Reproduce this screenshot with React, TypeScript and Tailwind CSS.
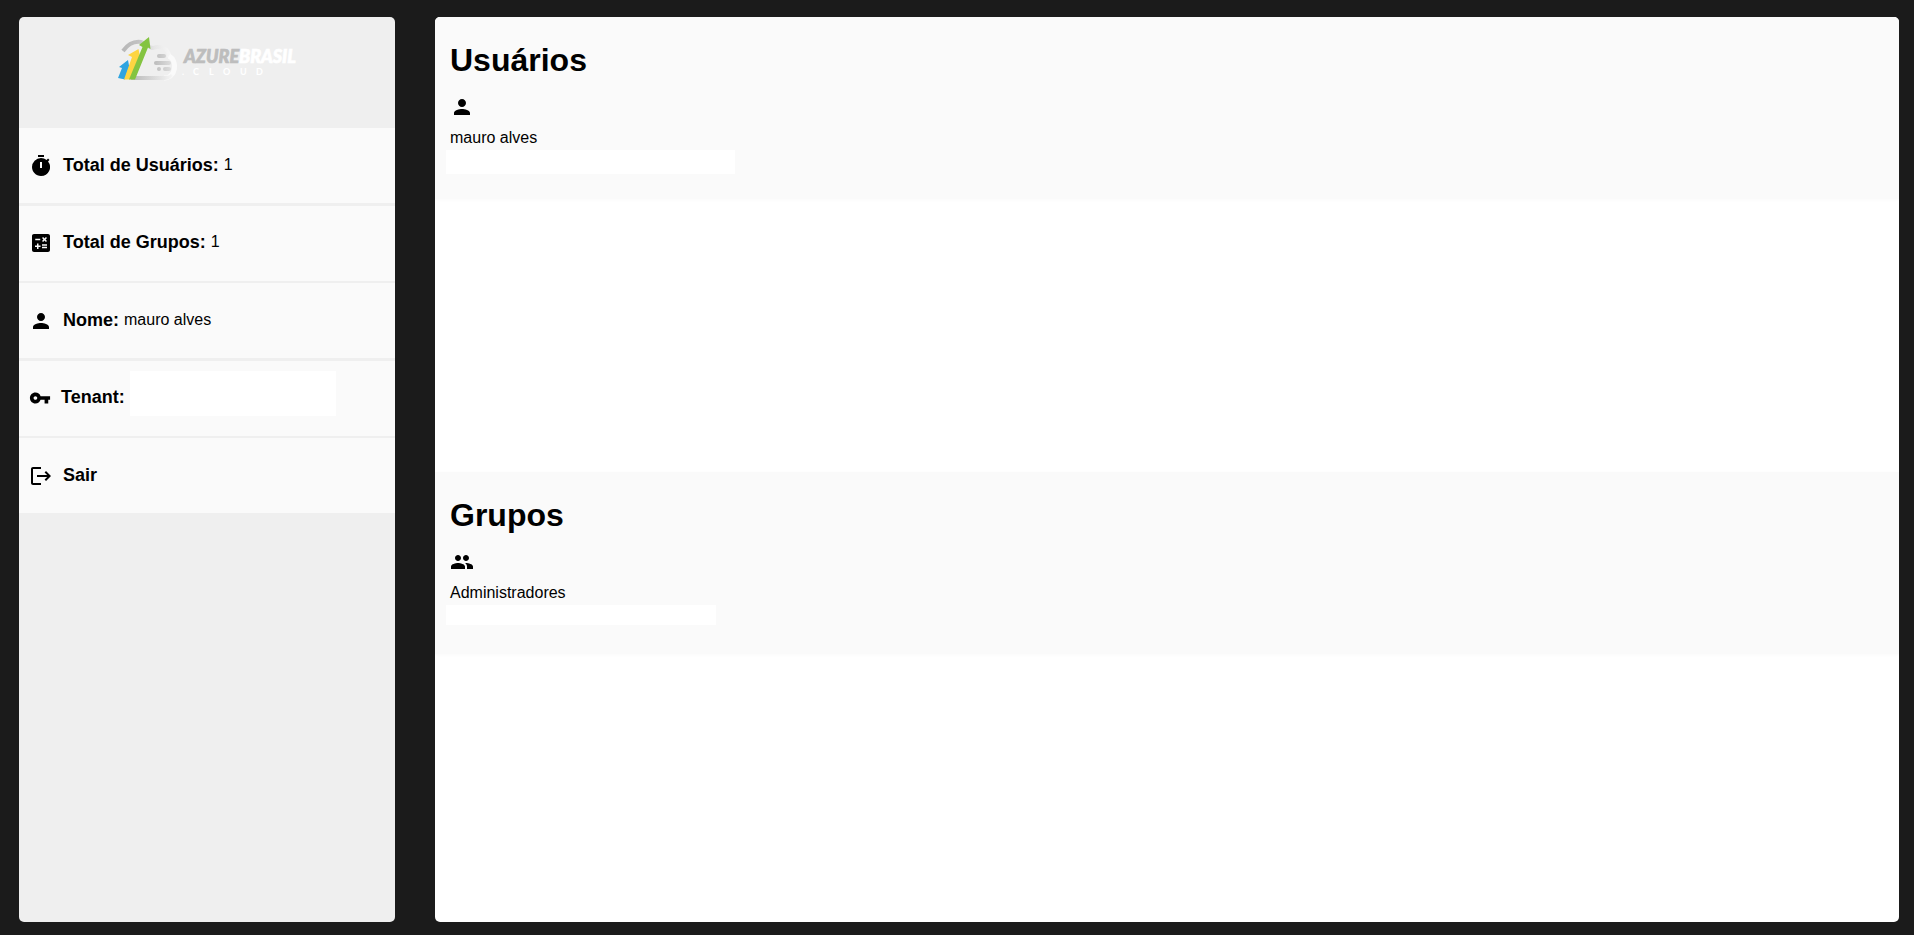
import type { ReactNode } from "react";
import { MdCalculate, MdGroup, MdLogout, MdPerson, MdTimer, MdVpnKey } from "react-icons/md";

function Logo() {
  return (
    <svg role="img" aria-label="Azure Brasil Cloud" width="180" height="48" viewBox="0 0 180 48">
      <defs>
        <linearGradient id="arc" x1="0" x2="1" y1="0" y2="0">
          <stop offset="0" stopColor="#b8b8b8" />
          <stop offset="0.3" stopColor="#c2c2c2" />
          <stop offset="0.6" stopColor="#e6e6e6" />
          <stop offset="1" stopColor="#fafafa" />
        </linearGradient>
        <linearGradient id="base" x1="0" x2="1" y1="0" y2="0">
          <stop offset="0" stopColor="#b8b8b8" />
          <stop offset="1" stopColor="#f6f6f6" />
        </linearGradient>
        <linearGradient id="bar" gradientUnits="userSpaceOnUse" x1="37" x2="55" y1="0" y2="0">
          <stop offset="0" stopColor="#bcbcbc" />
          <stop offset="1" stopColor="#dedede" />
        </linearGradient>
      </defs>
      <path d="M6 14C11 7 17 4 24 5C29 6 32 11 36 11C43 8 52 12 52 19C59 23 60 35 52 39" fill="none" stroke="url(#arc)" strokeWidth="4" />
      <path d="M52 19C61 24 59 41 47 41" fill="none" stroke="#fafafa" strokeWidth="5" />
      <path d="M15 39H48C51 39 53 38 54 37L56 39C53 42 50 43 47 43H14Z" fill="url(#base)" />
      <g fill="url(#bar)">
        <rect x="40" y="17" width="9" height="4" rx="2" />
        <rect x="37" y="24" width="17" height="4" rx="2" />
        <rect x="40" y="30" width="4" height="4" rx="2" />
        <rect x="46" y="30" width="8" height="4" rx="2" />
      </g>
      <path d="M1 41L5 31L2 30L11 23L13 34L11 33L8 42.5Z" fill="#2fa4e0" />
      <path d="M7 42.5L15 20L11 18L21.5 12L23.5 22L21.5 21L13 42.5Z" fill="#fdd542" />
      <path d="M12 42.5L25.5 10L22 8L32 0L33.5 12L31 10.5L18 42.5Z" fill="#84c441" />
      <g className="font-[Lato] text-[18px] font-black italic" strokeWidth="0.7">
        <text x="67" y="26" fill="#bdbdbd" stroke="#bdbdbd">AZURE</text>
        <text x="122" y="26" fill="#ffffff" stroke="#ffffff">BRASIL</text>
      </g>
      <g className="font-[Lato] text-[9px] font-bold" fill="#ffffff">
        <text x="65 76 92 106 123 139" y="38">.CLOUD</text>
      </g>
    </svg>
  );
}

function Row({ icon, label, children }: { icon: ReactNode; label: string; children?: ReactNode }) {
  return (
    <li className="flex h-[75px] items-center gap-2.5 bg-[#fafafa] pl-2.5">
      {icon}
      <div className="flex items-center gap-[5px] pb-0.5">
        <strong className="text-lg">{label}</strong>
        {children}
      </div>
    </li>
  );
}

function Section({ title, icon, name, children }: { title: string; icon: ReactNode; name: string; children: ReactNode }) {
  return (
    <section className="flex-1">
      <div className="h-[182px] bg-[#fafafa] px-[15px] pt-[25px] shadow-[0_1px_3px_#fafafa]">
        <h1 className="text-[32px] leading-9 font-bold">{title}</h1>
        <div className="mt-[17px]">{icon}</div>
        <p className="mt-[7px] leading-6">{name}</p>
        {children}
      </div>
    </section>
  );
}

export default function App() {
  return (
    <div className="flex min-h-screen gap-10 bg-[#1b1b1b] pt-[17px] pr-[15px] pb-[13px] pl-[19px] font-['Liberation_Sans',Arial,sans-serif] text-base text-black">
      <aside className="w-[376px] shrink-0 overflow-hidden rounded-[5px] bg-[#efefef]">
        <div className="flex h-[111px] justify-center pt-5">
          <Logo />
        </div>
        <ul className="flex h-[385px] flex-col justify-between">
          <Row icon={<MdTimer size={24} />} label="Total de Usuários:">1</Row>
          <Row icon={<MdCalculate size={24} />} label="Total de Grupos:">1</Row>
          <Row icon={<MdPerson size={24} />} label="Nome:">mauro alves</Row>
          <Row icon={<MdVpnKey size={22} />} label="Tenant:">
            <span className="-my-4 h-[53px] w-[206px] pb-2">
              <span className="block h-full bg-white" />
            </span>
          </Row>
          <li>
            <a href="#sair" className="flex h-[75px] items-center gap-2.5 bg-[#fafafa] pl-2.5 text-lg font-bold">
              <MdLogout size={24} />
              <span className="pb-0.5">Sair</span>
            </a>
          </li>
        </ul>
      </aside>
      <main className="flex min-w-0 flex-1 flex-col gap-[5px] overflow-hidden rounded-[5px] bg-white">
        <Section title="Usuários" icon={<MdPerson size={24} />} name="mauro alves">
          <div className="-ml-1 h-6 w-[289px] bg-white" />
        </Section>
        <Section title="Grupos" icon={<MdGroup size={24} />} name="Administradores">
          <div className="-ml-1 h-5 w-[270px] bg-white" />
        </Section>
      </main>
    </div>
  );
}
